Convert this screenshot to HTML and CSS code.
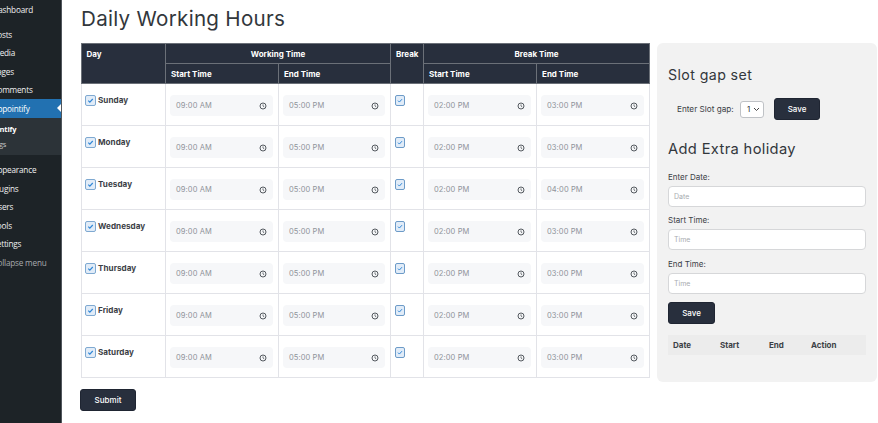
FILE: index.html
```html
<!DOCTYPE html>
<html lang="en">
<head>
<meta charset="utf-8">
<title>Daily Working Hours</title>
<link rel="stylesheet" href="styles.css">
</head>
<body>
<svg class="defs" width="0" height="0" aria-hidden="true">
  <symbol id="clock" viewBox="0 0 8 8"><circle cx="4" cy="4" r="3" fill="none" stroke="#555a60" stroke-width="1"/><path d="M4 2.4V4l1.3 1" fill="none" stroke="#555a60" stroke-width=".8"/></symbol>
  <symbol id="check" viewBox="0 0 12 12"><path d="M3 6.2l2.1 2.1L9 4" fill="none" stroke="#2f86d6" stroke-width="1.5"/></symbol>
</svg>
<aside class="sidebar">
  <nav class="menu">
    <a class="item first">Dashboard</a>
    <a class="item group">Posts</a>
    <a class="item">Media</a>
    <a class="item">Pages</a>
    <a class="item">Comments</a>
    <a class="item active">Appointify</a>
    <div class="submenu">
      <a class="sub strong">Appointify</a>
      <a class="sub">Settings</a>
    </div>
    <a class="item group2">Appearance</a>
    <a class="item">Plugins</a>
    <a class="item">Users</a>
    <a class="item">Tools</a>
    <a class="item">Settings</a>
    <a class="item collapse">Collapse menu</a>
  </nav>
</aside>
<main class="main">
  <section class="left">
    <h1 class="title">Daily Working Hours</h1>
    <table class="hours">
      <colgroup>
        <col class="c-day"><col class="c-time"><col class="c-time2"><col class="c-break"><col class="c-time"><col class="c-time">
      </colgroup>
      <thead>
        <tr class="h1row">
          <th rowspan="2" class="left-head">Day</th>
          <th colspan="2">Working Time</th>
          <th rowspan="2" class="left-head">Break</th>
          <th colspan="2">Break Time</th>
        </tr>
        <tr class="h2row">
          <th class="left-head">Start Time</th><th class="left-head">End Time</th>
          <th class="left-head">Start Time</th><th class="left-head">End Time</th>
        </tr>
      </thead>
      <tbody id="rows"></tbody>
    </table>
    <button class="btn submit">Submit</button>
  </section>
  <aside class="card">
    <h2 class="card-h first-h">Slot gap set</h2>
    <div class="slot">
      <label class="slot-label">Enter Slot gap:</label>
      <span class="select">1<svg width="7" height="5" viewBox="0 0 7 5"><path d="M1 1l2.5 2.5L6 1" fill="none" stroke="#444" stroke-width="1"/></svg></span>
      <button class="btn save-top">Save</button>
    </div>
    <h2 class="card-h second-h">Add Extra holiday</h2>
    <label class="lbl">Enter Date:</label>
    <div class="input">Date</div>
    <label class="lbl">Start Time:</label>
    <div class="input wide-gap">Time</div>
    <label class="lbl">End Time:</label>
    <div class="input">Time</div>
    <button class="btn save-bottom">Save</button>
    <div class="mini-head"><span class="m1">Date</span><span class="m2">Start</span><span class="m3">End</span><span class="m4">Action</span></div>
  </aside>
</main>
<script src="app.js"></script>
</body>
</html>
```
FILE: styles.css
```css
* { box-sizing: border-box; }
html, body { margin: 0; height: 423px; overflow: hidden; }
body { display: flex; background: #fff; font-family: Inter, "Open Sans", sans-serif; color: #32373c; }
.defs { position: absolute; }

.sidebar { width: 62px; flex: none; background: #1d2327; border-right: 1px solid #50565c; height: 423px; overflow: hidden; font-family: "Open Sans", sans-serif; font-size: 8.2px; letter-spacing: -.2px; color: #f0f0f1; }
.menu { display: flex; flex-direction: column; }
.item { display: block; height: 18.4px; line-height: 18.4px; margin-left: -7.5px; padding-left: 0; white-space: nowrap; }
.item.first { margin-top: 1px; }
.item.group { margin-top: 6.5px; }
.item.active { background: #2271b1; color: #fff; margin-left: 0; padding-left: 0; height: 19px; line-height: 19px; text-indent: -7.5px; position: relative; }
.item.active::after { content: ""; position: absolute; right: 0; top: 5px; border: 4.5px solid transparent; border-right-color: #fff; border-left: 0; }
.submenu { background: #2c3338; height: 37px; padding-top: 4px; }
.sub { display: block; height: 15px; line-height: 15px; color: #c3c4c7; font-size: 7.5px; }
.sub.strong { color: #fff; font-weight: 700; margin-left: -21px; }
.sub:last-child { margin-left: -20px; }
.group2 { margin-top: 6px; }
.collapse { margin-top: 1px; color: #a7aaad; letter-spacing: -.2px; }

.main { flex: 1; display: flex; min-width: 0; align-items: flex-start; }
.left { width: 587px; padding: 0 0 0 19px; flex: none; }
.title { margin: 8px 0 13px; height: 22px; line-height: 22px; font-size: 20.6px; font-weight: 400; letter-spacing: .28px; color: #32373c; white-space: nowrap; }

.hours { border-collapse: collapse; table-layout: fixed; width: 568px; font-size: 8.5px; margin-left: -.5px; }
.c-day { width: 84.5px; } .c-time { width: 113px; } .c-time2 { width: 112px; } .c-break { width: 33px; }
.hours th, .hours td { border: 1px solid #e2e3e8; padding: 0; }
.hours thead th { background: #282f3d; color: #fff; font-weight: 700; border-color: #6b7078; font-size: 8px; text-align: center; vertical-align: top; line-height: 18px; padding-top: 1px; }
.hours thead th.left-head { text-align: left; padding-left: 5px; }
.h1row { height: 20px; }
.h2row { height: 20px; }
.h2row th { vertical-align: middle; }
.hours tbody tr { height: 42px; }
.hours td { vertical-align: top; }
.day { display: flex; align-items: flex-start; gap: 2px; padding: 11px 0 0 3.5px; font-weight: 700; font-size: 8.1px; line-height: 10px; color: #3c4146; letter-spacing: .05px; }
.box { width: 11px; height: 11px; flex: none; border: 1px solid #7fa9d1; border-radius: 2px; background: #e1ecf8; display: block; }
.box svg { display: block; width: 100%; height: 100%; }
.break-cell .box { margin: 11px 0 0 4px; width: 10px; height: 11px; border-color: #6d9bc8; }
.field { height: 21px; margin: 11px 5.5px 0 4px; padding: 0 6px; background: #f6f7f9; border-radius: 4px; display: flex; align-items: center; justify-content: space-between; font-size: 7.5px; color: #8f939a; letter-spacing: .1px; }
.field svg { width: 8px; height: 8px; flex: none; margin-right: -.5px; }

.btn { display: block; border: 1px solid #1f2532; background: #282f3d; color: #fff; border-radius: 3px; font: 500 8px Inter, sans-serif; padding: 0; }
.submit { width: 56px; height: 22px; margin: 11px 0 0 -1px; }

.card { width: 220px; height: 339px; margin: 43px 0 0 8px; background: #f2f2f2; border-radius: 6px; padding: 0 11px; flex: none; }
.card-h { margin: 0; font-weight: 400; color: #32373c; white-space: nowrap; }
.first-h { padding-top: 23px; font-size: 14.2px; line-height: 17px; letter-spacing: .4px; }
.second-h { font-size: 14.7px; line-height: 18px; letter-spacing: .35px; margin-top: 20px; }
.slot { display: flex; align-items: center; margin-top: 15px; padding-left: 9px; height: 22px; }
.slot-label { font-size: 8.2px; color: #3c4146; width: 63px; }
.select { width: 24px; height: 17px; border: 1px solid #bfc2c6; border-radius: 3px; background: #fff; font-size: 8px; display: flex; align-items: center; gap: 3px; padding-left: 6px; }
.save-top { width: 46px; height: 22px; margin-left: 10px; }
.lbl { display: block; font-size: 8px; line-height: 10px; margin-bottom: 4px; color: #3c4146; }
.second-h + .lbl { margin-top: 14px; }
.input { width: 198px; height: 21px; background: #fff; border: 1px solid #d6d7d9; border-radius: 4px; padding-left: 5px; font-size: 7px; line-height: 19px; color: #a8abb0; margin-bottom: 8px; }
.input.wide-gap { margin-bottom: 9px; }
.save-bottom { width: 47px; height: 22px; }
.mini-head { display: flex; align-items: center; width: 198px; height: 20px; margin-top: 11px; background: #ececec; font-size: 8px; font-weight: 700; color: #3c4146; position: relative; }
.mini-head span { position: absolute; }
.m1 { left: 5px; } .m2 { left: 52px; } .m3 { left: 101px; } .m4 { left: 143px; }
```
FILE: app.js
```js
const rows = [
  ["Sunday", "03:00 PM"], ["Monday", "03:00 PM"], ["Tuesday", "04:00 PM"],
  ["Wednesday", "03:00 PM"], ["Thursday", "03:00 PM"], ["Friday", "03:00 PM"], ["Saturday", "03:00 PM"]
];
const box = '<span class="box"><svg viewBox="0 0 12 12"><use href="#check"/></svg></span>';
const field = t => `<td><div class="field"><span>${t}</span><svg><use href="#clock"/></svg></div></td>`;
document.getElementById("rows").innerHTML = rows.map(([d, e]) =>
  `<tr><td><div class="day">${box}<span>${d}</span></div></td>${field("09:00 AM")}${field("05:00 PM")}<td class="break-cell">${box}</td>${field("02:00 PM")}${field(e)}</tr>`
).join("");
```
